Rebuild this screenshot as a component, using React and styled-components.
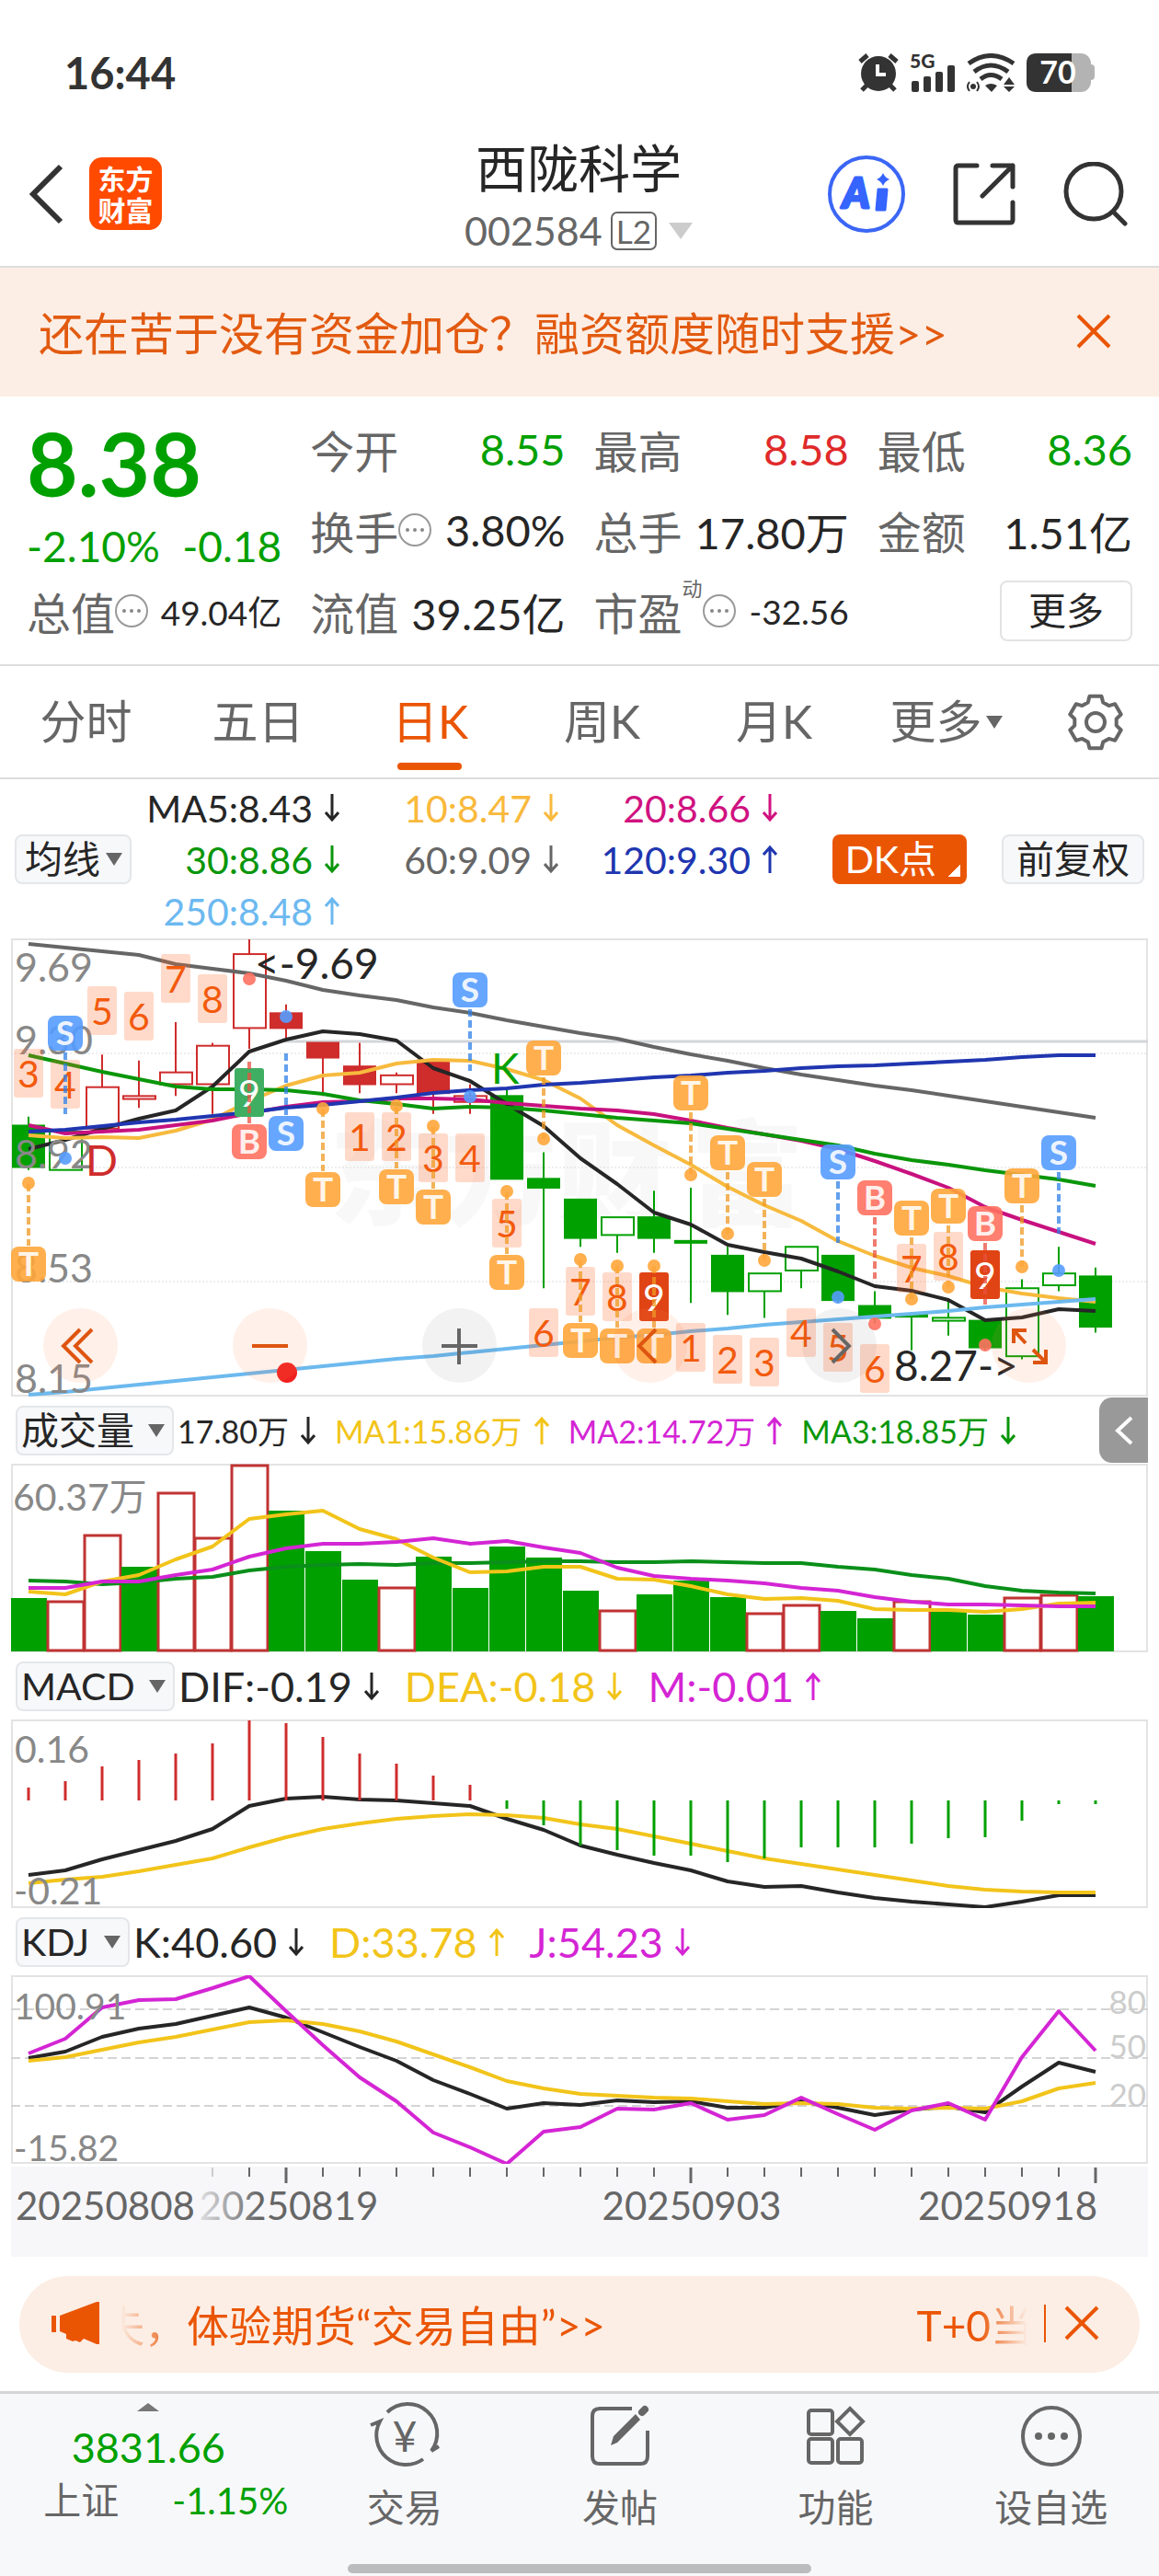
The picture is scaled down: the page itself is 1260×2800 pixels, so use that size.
import React, { useState } from "react";
import styled, { createGlobalStyle } from "styled-components";

const GREEN = "#00a000";
const UP = "#cf2c2c";
const ORANGE = "#ea5504";
const INK = "#262626";
const GREY = "#666666";
const YELLOW = "#f2c41a";
const PINK = "#d425d4";

const slotX = (i) => 31 + i * 40;

// [body top, body bottom, high, low, colour, filled]
const candles = [
  [9.06, 8.92, 9.09, 8.91, GREEN, 1],
  [9.04, 8.91, 9.04, 8.91, GREEN, 0],
  [9.19, 9.05, 9.3, 9.05, UP, 0],
  [9.16, 9.15, 9.28, 9.12, UP, 0],
  [9.24, 9.2, 9.41, 9.16, UP, 0],
  [9.33, 9.2, 9.34, 9.1, UP, 0],
  [9.64, 9.39, 9.69, 9.32, UP, 0],
  [9.44, 9.39, 9.47, 9.35, UP, 1],
  [9.34, 9.29, 9.34, 9.16, UP, 1],
  [9.26, 9.2, 9.34, 9.17, UP, 1],
  [9.23, 9.2, 9.24, 9.17, UP, 0],
  [9.28, 9.17, 9.28, 9.1, UP, 1],
  [9.16, 9.14, 9.2, 9.1, UP, 0],
  [9.16, 8.88, 9.18, 8.88, GREEN, 1],
  [8.88, 8.85, 8.97, 8.51, GREEN, 1],
  [8.81, 8.68, 8.81, 8.65, GREEN, 1],
  [8.75, 8.69, 8.75, 8.63, GREEN, 0],
  [8.75, 8.68, 8.84, 8.63, GREEN, 1],
  [8.67, 8.67, 8.85, 8.46, GREEN, 1],
  [8.62, 8.5, 8.65, 8.42, GREEN, 1],
  [8.56, 8.5, 8.56, 8.41, GREEN, 0],
  [8.65, 8.57, 8.65, 8.51, GREEN, 0],
  [8.62, 8.47, 8.62, 8.46, GREEN, 1],
  [8.45, 8.41, 8.5, 8.39, GREEN, 1],
  [8.42, 8.42, 8.42, 8.3, GREEN, 1],
  [8.41, 8.4, 8.47, 8.35, GREEN, 0],
  [8.4, 8.31, 8.4, 8.3, GREEN, 1],
  [8.51, 8.28, 8.54, 8.27, GREEN, 0],
  [8.56, 8.52, 8.65, 8.5, GREEN, 0],
  [8.55, 8.38, 8.58, 8.36, GREEN, 1],
];

const priceY = (p) => 1 + (9.69 - p) * 321.4;

const priceLines = [
  { color: "#666", ys: [6, 10, 14, 18, 28, 33, 38, 46, 56, 62, 67, 75, 81, 89, 96, 103, 109, 118, 126, 133, 141, 148, 154, 160, 165, 171, 177, 183, 189, 195] },
  { color: INK, ys: [229, 219, 207, 196, 187, 161, 123, 110, 101, 104, 111, 141, 155, 180, 204, 239, 267, 298, 311, 333, 341, 348, 362, 378, 383, 393, 415, 412, 403, 405] },
  { color: "#f7ba3e", ys: [214, 217, 216, 217, 209, 197, 177, 160, 149, 146, 136, 132, 133, 142, 154, 174, 203, 225, 246, 270, 290, 307, 329, 345, 358, 367, 379, 386, 391, 395] },
  { color: "#c8117f", ys: [203, 212, 210, 208, 203, 198, 190, 183, 178, 177, 174, 174, 175, 179, 182, 185, 187, 191, 198, 206, 213, 220, 229, 242, 256, 271, 292, 306, 319, 332] },
  { color: "#0a960a", ys: [127, 136, 145, 153, 161, 164, 164, 165, 169, 176, 180, 185, 183, 184, 187, 191, 195, 198, 201, 207, 213, 219, 225, 234, 241, 246, 252, 257, 262, 269] },
  { color: "#2036b0", ys: [210, 208, 204, 200, 197, 193, 189, 184, 181, 177, 173, 168, 165, 163, 159, 157, 154, 151, 149, 146, 144, 141, 139, 138, 136, 134, 132, 129, 127, 127] },
  { color: "#6cb9ee", ys: [496, 493, 489, 485, 481, 477, 473, 469, 465, 461, 457, 454, 450, 446, 442, 438, 434, 431, 427, 424, 420, 417, 414, 411, 408, 405, 401, 398, 395, 392] },
];

// [slot, number, top]
const counts = [
  [0, 3, 120], [1, 4, 132], [2, 5, 52], [3, 6, 58], [4, 7, 17], [5, 8, 39], [6, 9, 141, "#3fae63"],
  [9, 1, 189], [10, 2, 189], [11, 3, 212], [12, 4, 212], [13, 5, 283], [14, 6, 402], [15, 7, 357],
  [16, 8, 363], [17, 9, 363, "#e04415"], [18, 1, 418], [19, 2, 431], [20, 3, 434], [21, 4, 402],
  [22, 5, 418], [23, 6, 441], [24, 7, 332], [25, 8, 319], [26, 9, 339, "#e04415"],
];

// [slot, letter, box top, dot y]
const signals = [
  [0, "T", 335, 266], [1, "S", 84, 239], [6, "B", 202, 44], [7, "S", 193, 85], [8, "T", 254, 185],
  [10, "T", 251, 182], [11, "T", 273, 204], [12, "S", 37, 172], [13, "T", 344, 275], [14, "T", 111, 218],
  [15, "T", 418, 349], [16, "T", 424, 356], [17, "T", 424, 356], [18, "T", 149, 257], [19, "T", 214, 321],
  [20, "T", 243, 350], [22, "S", 224, 390], [23, "B", 263, 419], [24, "T", 285, 392], [25, "T", 272, 379],
  [26, "B", 291, 442], [27, "T", 250, 357], [28, "S", 214, 361],
];
const signalColors = {
  T: ["#ffa63a", "#ef9a22"],
  S: ["#559cff", "#2f80e8"],
  B: ["#ff7161", "#e9503f"],
};

const volumes = [17.3, 16.3, 37.7, 27.3, 51.3, 36.9, 60.3, 45.4, 32.5, 23.1, 20.8, 30.6, 20.6, 34, 30.4, 19.6, 13.5, 18.4, 22.9, 17.5, 12.5, 15.1, 13.1, 10.8, 16.3, 12.7, 11.8, 17.6, 18.5, 17.8];
const upDays = [1, 2, 4, 5, 6, 10, 16, 20, 21, 24, 27, 28];
const volumeLines = [
  { color: "#0a8f1a", ys: [127, 128, 131, 129, 125, 123, 116, 112, 110, 109, 110, 108, 108, 107, 106, 106, 107, 107, 106, 107, 108, 108, 112, 115, 121, 125, 133, 138, 140, 141] },
  { color: YELLOW, ys: [139, 142, 128, 121, 104, 90, 60, 55, 51, 71, 82, 102, 118, 117, 112, 112, 125, 126, 133, 142, 147, 146, 149, 158, 159, 159, 161, 158, 152, 151] },
  { color: PINK, ys: [135, 135, 128, 128, 121, 115, 101, 92, 87, 87, 85, 81, 87, 84, 91, 97, 113, 122, 125, 127, 130, 135, 138, 145, 150, 153, 153, 154, 155, 155] },
];

const macdEnds = [74, 67, 51, 44, 37, 26, 1, 4, 19, 37, 48, 61, 71, 97, 115, 137, 142, 148, 148, 155, 151, 139, 139, 139, 135, 129, 128, 110, 92, 92];
const macdLines = [
  { color: INK, ys: [169, 164, 152, 142, 132, 119, 94, 86, 84, 87, 88, 91, 94, 108, 120, 137, 147, 156, 164, 176, 182, 181, 188, 194, 198, 201, 204, 198, 191, 191] },
  { color: YELLOW, ys: [178, 174, 171, 165, 158, 151, 139, 128, 119, 113, 108, 105, 103, 104, 107, 114, 119, 127, 135, 143, 151, 157, 163, 169, 175, 181, 185, 187, 188, 188] },
];

const kdjLines = [
  { color: INK, ys: [90, 83, 67, 58, 53, 44, 35, 46, 62, 78, 93, 114, 129, 145, 139, 141, 136, 138, 137, 144, 144, 137, 144, 152, 146, 143, 149, 121, 95, 105] },
  { color: YELLOW, ys: [93, 89, 81, 73, 67, 59, 51, 49, 53, 61, 72, 86, 100, 115, 123, 129, 131, 133, 134, 137, 140, 139, 140, 144, 145, 144, 145, 137, 123, 117] },
  { color: PINK, ys: [85, 69, 35, 27, 26, 14, 1, 39, 76, 111, 137, 171, 187, 205, 170, 165, 145, 146, 139, 157, 152, 133, 151, 168, 147, 139, 157, 89, 39, 82] },
];

const averages = [
  ["MA5:8.43", "down", INK],
  ["10:8.47", "down", "#f9b93c"],
  ["20:8.66", "down", "#d0127f"],
  ["30:8.86", "down", "#0a960a"],
  ["60:9.09", "down", GREY],
  ["120:9.30", "up", "#2036b0"],
  ["250:8.48", "up", "#6cb9f0"],
];

const Lines = ({ series }) =>
  series.map((s) => (
    <polyline
      key={s.color}
      points={s.ys.map((y, i) => `${slotX(i)},${y}`).join(" ")}
      fill="none"
      stroke={s.color}
      strokeWidth="4"
      strokeLinejoin="round"
    />
  ));

const Frame = ({ height }) => (
  <rect x="13" y="1" width="1234" height={height - 2} fill="none" stroke="#e3e3e3" strokeWidth="2" />
);

const Arrow = ({ dir }) => (
  <ArrowSvg viewBox="0 0 16 32">
    <path
      d={dir === "up" ? "M8 31V3M1 11l7-8 7 8" : "M8 1v28M1 21l7 8 7-8"}
      fill="none"
      stroke="currentColor"
      strokeWidth="3"
    />
  </ArrowSvg>
);

const Cross = () => (
  <svg width="38" height="38" viewBox="0 0 38 38">
    <path d="M2 2l34 34M36 2L2 36" stroke={ORANGE} strokeWidth="4" />
  </svg>
);

const More = () => (
  <svg width="36" height="36" viewBox="0 0 36 36">
    <circle cx="18" cy="18" r="17" fill="none" stroke="#999" strokeWidth="2" />
    <circle cx="10" cy="18" r="2" fill="#888" />
    <circle cx="18" cy="18" r="2" fill="#888" />
    <circle cx="26" cy="18" r="2" fill="#888" />
  </svg>
);

const gearPoints = () => {
  const pts = [];
  for (let t = 0; t < 6; t++) {
    [[-21, 23], [-13, 29], [13, 29], [21, 23]].forEach(([a, r]) => {
      const rad = ((t * 60 + a - 90) * Math.PI) / 180;
      pts.push(`${(32 + r * Math.cos(rad)).toFixed(1)},${(32 + r * Math.sin(rad)).toFixed(1)}`);
    });
  }
  return pts.join(" ");
};

function StatusIcons() {
  return (
    <StatusRight>
      <svg width="44" height="42" viewBox="0 0 44 42">
        <circle cx="22" cy="22" r="19" fill="#333" />
        <path d="M2 9l8-7M42 9l-8-7M9 35l-5 5M35 35l5 5" stroke="#333" strokeWidth="5" />
        <path d="M21 12v11h9" fill="none" stroke="#fff" strokeWidth="4" />
      </svg>
      <svg width="50" height="42" viewBox="0 0 50 42" overflow="visible">
        <text x="0" y="16" fontSize="21" fontWeight="900" fill="#333">5G</text>
        <rect x="2" y="30" width="8" height="12" rx="2" fill="#333" />
        <rect x="15" y="25" width="8" height="17" rx="2" fill="#333" />
        <rect x="28" y="20" width="8" height="22" rx="2" fill="#333" />
        <rect x="41" y="13" width="8" height="29" rx="2" fill="#333" />
      </svg>
      <svg width="53" height="42" viewBox="0 0 53 42">
        <g fill="none" stroke="#333" strokeWidth="5">
          <path d="M2 11Q26 -6 51 11" />
          <path d="M8 20Q26 6 45 20" />
          <path d="M15 28Q26 19 38 28" />
        </g>
        <path d="M20 35q6 -4 13 0l-6 7z" fill="#333" />
        <circle cx="7" cy="36" r="3" fill="#333" />
        <path d="M3 31q-4 5 0 10M11 31q4 5 0 10" fill="none" stroke="#333" strokeWidth="2" />
        <path d="M40 34l6-8 6 8zM40 36h12l-6 6z" fill="#333" />
      </svg>
      <svg width="74" height="42" viewBox="0 0 74 42">
        <rect x="60" y="12" width="14" height="17" rx="4" fill="#b3b3b3" />
        <rect width="70" height="42" rx="11" fill="#b3b3b3" />
        <path d="M11 0H49V42H11Q0 42 0 31V11Q0 0 11 0Z" fill="#333" />
        <text x="34" y="33" textAnchor="middle" fontSize="34" fontWeight="700" fill="#fff">70</text>
      </svg>
    </StatusRight>
  );
}

function PriceChart() {
  return (
    <ChartBox>
      <ChartSvg viewBox="12 0 1236 498" role="img" aria-label="日K线图">
        <g fill="#f8f8f9" fontSize="124" fontWeight="900">
          <text x="358" y="302">东</text>
          <text x="482" y="302">方</text>
          <text x="606" y="302">财</text>
          <text x="750" y="302">富</text>
        </g>
        <Frame height={498} />
        {[125, 249, 373].map((y) => (
          <line key={y} x1="12" x2="1248" y1={y} y2={y} stroke="#dcdcdc" strokeWidth="1" strokeDasharray="2 2" />
        ))}
        <line x1="310" x2="1248" y1="112" y2="112" stroke="#d3d5d9" strokeWidth="3" />
        {candles.map(([top, bottom, high, low, color, filled], i) => {
          const x = slotX(i);
          const y = priceY(top);
          const h = Math.max(priceY(bottom) - y, 2);
          return (
            <g key={i} stroke={color} strokeWidth="2">
              <line x1={x} x2={x} y1={priceY(high)} y2={y} />
              <line x1={x} x2={x} y1={y + h} y2={priceY(low)} />
              <rect x={x - 17} y={y} width={filled ? 34 : 35} height={h} fill={filled ? color : "#fff"} />
            </g>
          );
        })}
        <Lines series={priceLines} />
        <g fill="#888" fontSize="43">
          <text x="16" y="47">9.69</text>
          <text x="16" y="126">9.30</text>
          <text x="16" y="250">8.92</text>
          <text x="16" y="374">8.53</text>
          <text x="16" y="494">8.15</text>
        </g>
        {counts.map(([slot, n, top, bg]) => (
          <g key={slot}>
            <rect x={slotX(slot) - 16} y={top} width="32" height="53" rx="3" fill={bg || "#ff6a2b"} fillOpacity={bg ? 1 : 0.25} />
            <text x={slotX(slot)} y={top + 42} textAnchor="middle" fontSize="41" fill={bg ? "#fff" : "#f25a0d"}>
              {n}
            </text>
          </g>
        ))}
        {signals.map(([slot, letter, top, dot]) => {
          const x = slotX(slot);
          const [fill, line] = signalColors[letter];
          const start = dot > top ? top + 40 : top - 68;
          return (
            <g key={slot}>
              <line x1={x} x2={x} y1={start} y2={start + 67} stroke={line} strokeOpacity="0.75" strokeWidth="4" strokeDasharray="8 4" />
              <circle cx={x} cy={dot} r="7" fill={fill} fillOpacity="0.9" />
              <rect x={x - 19} y={top} width="38" height="38" rx="8" fill={fill} fillOpacity="0.9" />
              <text x={x} y={top + 32} textAnchor="middle" fontSize="37" fontWeight="700" fill="#fff" fillOpacity="0.9">
                {letter}
              </text>
            </g>
          );
        })}
        <text x="93" y="258" fontSize="46" fill={UP}>D</text>
        <text x="534" y="158" fontSize="46" fill={GREEN}>K</text>
        <text x="277" y="44" fontSize="46" fill={INK}>&lt;-9.69</text>
        <text x="972" y="481" fontSize="46" fill={INK}>8.27-&gt;</text>
        <circle cx="312" cy="472" r="11" fill="#f02020" />
      </ChartSvg>
      <Controls>
        <RoundButton aria-label="快退">
          <path d="M40 22L22 40l18 18M53 22L35 40l18 18" />
        </RoundButton>
        <RoundButton aria-label="缩小">
          <path d="M21 40h39" />
        </RoundButton>
        <RoundButton aria-label="放大" $grey>
          <path d="M21 40h39M40 21v39" />
        </RoundButton>
        <RoundButton aria-label="左移">
          <path d="M47 22L29 40l18 18" />
        </RoundButton>
        <RoundButton aria-label="右移" $grey>
          <path d="M33 22l18 18-18 18" />
        </RoundButton>
        <RoundButton aria-label="全屏">
          <path d="M38 23H24v14M24 23l13 14M59 44v14H45M59 58L45 44" />
        </RoundButton>
      </Controls>
    </ChartBox>
  );
}

const RoundButton = ({ children, $grey, ...rest }) => (
  <Round type="button" $grey={$grey} {...rest}>
    <svg width="80" height="80" viewBox="0 0 80 80" fill="none" stroke="currentColor" strokeWidth="4">
      {children}
    </svg>
  </Round>
);

function VolumeChart() {
  return (
    <ChartSvg viewBox="12 0 1236 205" role="img" aria-label="成交量">
      <Frame height={205} />
      {volumes.map((v, i) => {
        const h = Math.round((v / 60.37) * 203);
        const up = upDays.includes(i);
        return up ? (
          <rect key={i} x={slotX(i) - 19} y={205 - h} width="39" height={h - 2} fill="#fff" stroke="#c03333" strokeWidth="3" />
        ) : (
          <rect key={i} x={slotX(i) - 19} y={204 - h} width="39" height={h} fill={GREEN} />
        );
      })}
      <Lines series={volumeLines} />
      <text x="14" y="51" fontSize="41" fill="#888">60.37万</text>
    </ChartSvg>
  );
}

function MacdChart() {
  return (
    <ChartSvg viewBox="12 0 1236 205" role="img" aria-label="MACD">
      <Frame height={205} />
      <Lines series={macdLines} />
      {macdEnds.map((y, i) => (
        <line key={i} x1={slotX(i)} x2={slotX(i)} y1="88" y2={y} stroke={y < 88 ? UP : GREEN} strokeWidth="3" />
      ))}
      <text x="16" y="47" fontSize="41" fill="#888">0.16</text>
      <text x="15" y="201" fontSize="41" fill="#888">-0.21</text>
    </ChartSvg>
  );
}

function KdjChart() {
  return (
    <ChartSvg viewBox="12 0 1236 205" role="img" aria-label="KDJ">
      <Frame height={205} />
      {[37, 90, 142].map((y) => (
        <line key={y} x1="12" x2="1248" y1={y} y2={y} stroke="#d4d4d4" strokeWidth="2" strokeDasharray="10 5" />
      ))}
      <Lines series={kdjLines} />
      <g fill="#888" fontSize="39">
        <text x="15" y="48">100.91</text>
        <text x="15" y="202">-15.82</text>
      </g>
      <g fill="#ccc" fontSize="35" textAnchor="end">
        <text x="1246" y="42">80</text>
        <text x="1246" y="90">50</text>
        <text x="1246" y="143">20</text>
      </g>
    </ChartSvg>
  );
}

function DateAxis() {
  const ticks = [];
  for (let i = 5; i < 30; i++) ticks.push(i);
  const major = [7, 18, 29];
  return (
    <ChartSvg viewBox="12 0 1236 101" role="img" aria-label="日期">
      <defs>
        <linearGradient id="fade" gradientUnits="userSpaceOnUse" x1="212" x2="282" y1="0" y2="0">
          <stop offset="0" stopColor={GREY} stopOpacity="0.1" />
          <stop offset="1" stopColor={GREY} />
        </linearGradient>
      </defs>
      <rect x="12" y="3" width="1236" height="98" fill="#f7f7fa" />
      {ticks.map((i) => (
        <line
          key={i}
          x1={slotX(i)}
          x2={slotX(i)}
          y1="4"
          y2={major.includes(i) ? 21 : 14}
          stroke={i === 5 ? "#ccc" : GREY}
          strokeWidth={major.includes(i) ? 3 : 2}
        />
      ))}
      <g fill={GREY} fontSize="42">
        <text x="17" y="61">20250808</text>
        <text x="314" y="61" textAnchor="middle" fill="url(#fade)">20250819</text>
        <text x="752" y="61" textAnchor="middle">20250903</text>
        <text x="1193" y="61" textAnchor="end">20250918</text>
      </g>
    </ChartSvg>
  );
}

const Picker = ({ label, name, wide }) => (
  <PickerBox $wide={wide}>
    <select aria-label={name} defaultValue={label}>
      <option>{label}</option>
    </select>
    <Caret />
  </PickerBox>
);

const Reading = ({ text, dir, color }) => (
  <ReadingBox $color={color}>
    {text}
    <Arrow dir={dir} />
  </ReadingBox>
);

export default function App() {
  const [tab, setTab] = useState("日K");

  return (
    <Page>
      <GlobalStyle />
      <StatusBar>
        <Clock>16:44</Clock>
        <StatusIcons />
      </StatusBar>

      <Header>
        <HeaderSide>
          <IconButton type="button" aria-label="返回">
            <svg width="38" height="66" viewBox="0 0 38 66">
              <path d="M34 3L4 33l30 30" fill="none" stroke="#333" strokeWidth="6" />
            </svg>
          </IconButton>
          <Logo>
            <span>东方</span>
            <span>财富</span>
          </Logo>
        </HeaderSide>
        <Title>
          <h1>西陇科学</h1>
          <Code>
            002584 <Level>L2</Level>
            <Caret $size={13} $color="#ccc" />
          </Code>
        </Title>
        <HeaderSide $end>
          <IconButton type="button" aria-label="AI">
            <svg width="84" height="84" viewBox="0 0 84 84">
              <circle cx="42" cy="42" r="40" fill="none" stroke="#3b66f5" strokeWidth="4" />
              <text x="16" y="57" fontSize="45" fontWeight="900" fontStyle="italic" fill="#3564ff" stroke="#3564ff" strokeWidth="3" strokeLinejoin="round">A</text>
              <path d="M55 37h9l-2 22h-9z" fill="#3564ff" stroke="#3564ff" strokeWidth="3" strokeLinejoin="round" />
              <path d="M60 19q2 5 7 7q-5 2-7 7q-2-5-7-7q5-2 7-7z" fill="#3564ff" />
            </svg>
          </IconButton>
          <IconButton type="button" aria-label="分享">
            <svg width="68" height="68" viewBox="0 0 68 68" fill="none" stroke="#333" strokeWidth="5" strokeLinecap="round" strokeLinejoin="round">
              <path d="M26 3H6Q3 3 3 6V62Q3 65 6 65H62Q65 65 65 62V43" />
              <path d="M43 3H65V26M65 3L32 36" />
            </svg>
          </IconButton>
          <IconButton type="button" aria-label="搜索">
            <svg width="70" height="70" viewBox="0 0 70 70" fill="none" stroke="#333" strokeWidth="5" strokeLinecap="round">
              <circle cx="33" cy="32" r="30" />
              <path d="M54 54l13 13" />
            </svg>
          </IconButton>
        </HeaderSide>
      </Header>

      <Banner>
        <a href="#margin">还在苦于没有资金加仓？融资额度随时支援&gt;&gt;</a>
        <IconButton type="button" aria-label="关闭">
          <Cross />
        </IconButton>
      </Banner>

      <Quote>
        <PriceCell>
          <Price>8.38</Price>
          <Change>
            <span>-2.10%</span>
            <span>-0.18</span>
          </Change>
        </PriceCell>
        <Stat><span>今开</span><Value $color={GREEN}>8.55</Value></Stat>
        <Stat><span>最高</span><Value $color="#e02a2a">8.58</Value></Stat>
        <Stat><span>最低</span><Value $color={GREEN}>8.36</Value></Stat>
        <Stat><span>换手<More /></span><Value>3.80%</Value></Stat>
        <Stat><span>总手</span><Value>17.80万</Value></Stat>
        <Stat><span>金额</span><Value>1.51亿</Value></Stat>
        <Stat><span>总值<More /></span><Value $small>49.04亿</Value></Stat>
        <Stat><span>流值</span><Value>39.25亿</Value></Stat>
        <Stat><span>市盈<sup>动</sup><More /></span><Value $small>-32.56</Value></Stat>
        <Stat $end><MoreButton type="button">更多</MoreButton></Stat>
      </Quote>

      <Tabs>
        {["分时", "五日", "日K", "周K", "月K"].map((t) => (
          <Tab key={t} type="button" $active={t === tab} onClick={() => setTab(t)}>
            <span>{t}</span>
          </Tab>
        ))}
        <Tab type="button">
          <span>更多</span>
          <Caret $size={9} />
        </Tab>
        <GearButton type="button" aria-label="设置">
          <svg width="64" height="64" viewBox="0 0 64 64" fill="none" stroke={GREY} strokeWidth="4" strokeLinejoin="round">
            <polygon points={gearPoints()} />
            <circle cx="32" cy="32" r="10" />
          </svg>
        </GearButton>
      </Tabs>

      <Averages>
        <Picker label="均线" name="均线" />
        <AverageGrid>
          {averages.map(([text, dir, color]) => (
            <Reading key={text} text={text} dir={dir} color={color} />
          ))}
        </AverageGrid>
        <ChipRow>
          <DkButton type="button">DK点</DkButton>
          <Chip type="button">前复权</Chip>
        </ChipRow>
      </Averages>

      <PriceChart />

      <Indicator>
        <Picker label="成交量" name="指标一" wide />
        <Readings $small>
          <Reading text="17.80万" dir="down" color={INK} />
          <Reading text="MA1:15.86万" dir="up" color={YELLOW} />
          <Reading text="MA2:14.72万" dir="up" color={PINK} />
          <Reading text="MA3:18.85万" dir="down" color="#0a960a" />
        </Readings>
        <Drawer type="button" aria-label="展开">
          <svg width="22" height="34" viewBox="0 0 22 34">
            <path d="M19 3L4 17l15 14" fill="none" stroke="#fff" strokeWidth="4" />
          </svg>
        </Drawer>
      </Indicator>
      <VolumeChart />

      <Indicator>
        <Picker label="MACD" name="指标二" wide />
        <Readings>
          <Reading text="DIF:-0.19" dir="down" color={INK} />
          <Reading text="DEA:-0.18" dir="down" color={YELLOW} />
          <Reading text="M:-0.01" dir="up" color={PINK} />
        </Readings>
      </Indicator>
      <MacdChart />

      <Indicator>
        <Picker label="KDJ" name="指标三" wide />
        <Readings>
          <Reading text="K:40.60" dir="down" color={INK} />
          <Reading text="D:33.78" dir="up" color={YELLOW} />
          <Reading text="J:54.23" dir="down" color={PINK} />
        </Readings>
      </Indicator>
      <KdjChart />
      <DateAxis />

      <Promo>
        <svg width="56" height="48" viewBox="0 0 56 48" fill={ORANGE}>
          <path d="M1 16h5v18H1zM10 16L50 1h3v46h-3L36 41l-4 4-5-2-3 1-7-3v-5l-7-3z" />
        </svg>
        <Ticker>
          <span>失，体验期货“交易自由”&gt;&gt;</span>
          <span>T+0当</span>
        </Ticker>
        <Divider />
        <IconButton type="button" aria-label="关闭">
          <Cross />
        </IconButton>
      </Promo>

      <BottomBar>
        <NavRow>
          <IndexBlock href="#index">
            <UpCaret />
            <strong>3831.66</strong>
            <div>
              <span>上证</span>
              <em>-1.15%</em>
            </div>
          </IndexBlock>
          <NavItem type="button">
            <NavIcon viewBox="0 0 80 80">
              <path d="M21 14A32 32 0 0 1 69 56L77 51" />
              <path d="M60 65A32 32 0 0 1 13 24L3 28" />
              <text x="40" y="57" textAnchor="middle" fontSize="46" fill={GREY} stroke="none">¥</text>
            </NavIcon>
            交易
          </NavItem>
          <NavItem type="button">
            <NavIcon viewBox="0 0 80 80">
              <path d="M53 10H18Q10 10 10 18V62Q10 70 18 70H62Q70 70 70 62V34" />
              <path d="M30 50l3-10 24-24 5 6-25 25z" fill={GREY} stroke="none" />
              <path d="M64 14l3-3" strokeWidth="8" strokeLinecap="round" />
            </NavIcon>
            发帖
          </NavItem>
          <NavItem type="button">
            <NavIcon viewBox="0 0 80 80">
              <rect x="11" y="12" width="26" height="26" rx="3" />
              <rect x="11" y="43" width="26" height="26" rx="3" />
              <rect x="43" y="43" width="26" height="26" rx="3" />
              <path d="M56 10l14 14-14 14-14-14z" />
            </NavIcon>
            功能
          </NavItem>
          <NavItem type="button">
            <NavIcon viewBox="0 0 80 80">
              <circle cx="40" cy="40" r="31" />
              <g fill={GREY} stroke="none">
                <circle cx="26" cy="40" r="4" />
                <circle cx="40" cy="40" r="4" />
                <circle cx="54" cy="40" r="4" />
              </g>
            </NavIcon>
            设自选
          </NavItem>
        </NavRow>
        <HomeBar />
      </BottomBar>
    </Page>
  );
}

const GlobalStyle = createGlobalStyle`
  * {
    box-sizing: border-box;
  }
  body {
    margin: 0;
    background: #fff;
    color: ${INK};
    font-family: Lato, "Noto Sans CJK SC", sans-serif;
  }
  button, select {
    font: inherit;
    color: inherit;
    margin: 0;
    padding: 0;
    border: 0;
    background: none;
    cursor: pointer;
  }
  a {
    color: inherit;
    text-decoration: none;
  }
  svg {
    display: block;
    flex: none;
  }
`;

const Page = styled.div`
  display: flex;
  flex-direction: column;
  min-height: 100vh;
`;

const StatusBar = styled.div`
  display: flex;
  align-items: center;
  justify-content: space-between;
  height: 132px;
  padding: 26px 70px 0;
`;

const Clock = styled.span`
  font-size: 47px;
  font-weight: 700;
  color: #333;
`;

const StatusRight = styled.div`
  display: flex;
  gap: 12px;
`;

const Header = styled.header`
  display: grid;
  grid-template-columns: 1fr auto 1fr;
  align-items: center;
  height: 159px;
  padding: 0 34px 0 32px;
  border-bottom: 2px solid #ddd;
`;

const HeaderSide = styled.div`
  display: flex;
  align-items: center;
  gap: ${(p) => (p.$end ? 52 : 27)}px;
  justify-content: ${(p) => (p.$end ? "flex-end" : "flex-start")};
`;

const IconButton = styled.button`
  display: flex;
`;

const Logo = styled.div`
  display: flex;
  flex-direction: column;
  justify-content: center;
  align-items: center;
  width: 79px;
  height: 79px;
  border-radius: 14px;
  background: #ff4a00;
  color: #fff;
  font-size: 30px;
  font-weight: 700;
  line-height: 34px;
`;

const Title = styled.div`
  display: flex;
  flex-direction: column;
  align-items: center;
  padding-top: 12px;

  h1 {
    margin: 0;
    font-size: 56px;
    font-weight: 400;
    line-height: 68px;
  }
`;

const Code = styled.div`
  display: flex;
  align-items: center;
  gap: 9px;
  font-size: 43px;
  line-height: 68px;
  color: ${GREY};
`;

const Level = styled.span`
  padding: 0 4px;
  border: 2px solid ${GREY};
  border-radius: 7px;
  font-size: 35px;
  line-height: 38px;
`;

const Caret = styled.i`
  width: 0;
  height: 0;
  margin-left: 4px;
  border: ${(p) => p.$size || 9}px solid transparent;
  border-top: ${(p) => (p.$size || 9) + 5}px solid ${(p) => p.$color || GREY};
  border-bottom: 0;
`;

const Banner = styled.div`
  display: flex;
  align-items: center;
  justify-content: space-between;
  height: 140px;
  padding: 0 52px 3px 42px;
  background: #fceee5;
  color: #e25a10;
  font-size: 49px;
`;

const Quote = styled.section`
  display: grid;
  grid-template-columns: repeat(4, 1fr);
  grid-auto-rows: 88px;
  column-gap: 31px;
  padding: 13px 29px 14px;
  border-bottom: 2px solid #ddd;
`;

const PriceCell = styled.div`
  grid-row: span 2;
  padding-top: 4px;
  color: ${GREEN};
`;

const Price = styled.div`
  font-size: 96px;
  font-weight: 700;
  line-height: 110px;
`;

const Change = styled.div`
  display: flex;
  justify-content: space-between;
  font-size: 46px;
  line-height: 72px;
`;

const Stat = styled.div`
  display: flex;
  align-items: center;
  justify-content: ${(p) => (p.$end ? "flex-end" : "space-between")};
  font-size: 48px;
  color: ${GREY};
  white-space: nowrap;

  span {
    display: flex;
    align-items: center;
  }
  sup {
    align-self: flex-start;
    font-size: 22px;
    line-height: 22px;
  }
`;

const Value = styled.b`
  font-weight: 400;
  font-size: ${(p) => (p.$small ? 37 : 47)}px;
  color: ${(p) => p.$color || INK};
`;

const MoreButton = styled.button`
  width: 144px;
  height: 66px;
  border: 2px solid #e3e3e3;
  border-radius: 8px;
  font-size: 41px;
  line-height: 60px;
  color: ${INK};
`;

const Tabs = styled.nav`
  display: flex;
  height: 123px;
  border-bottom: 2px solid #ddd;
`;

const Tab = styled.button`
  flex: 187;
  display: flex;
  align-items: center;
  justify-content: center;
  font-size: 50px;
  color: ${(p) => (p.$active ? ORANGE : GREY)};

  span {
    display: flex;
    flex-direction: column;
    align-items: center;
    height: 100%;
    padding-top: 15px;
    line-height: 90px;
  }
  span::after {
    content: "";
    width: 70px;
    height: 8px;
    border-radius: 4px;
    background: ${(p) => (p.$active ? ORANGE : "transparent")};
  }
`;

const GearButton = styled.button`
  flex: 138;
  display: flex;
  align-items: center;
  justify-content: center;
`;

const Averages = styled.section`
  display: flex;
  align-items: center;
  padding: 3px 16px 2px;
`;

const AverageGrid = styled.div`
  display: grid;
  grid-template-columns: 226px 238px 238px;
  grid-auto-rows: 56px;
  justify-items: end;
  font-size: 41px;
`;

const ReadingBox = styled.span`
  display: flex;
  align-items: center;
  gap: 13px;
  color: ${(p) => p.$color};
  white-space: nowrap;
`;

const ArrowSvg = styled.svg`
  width: 16px;
  height: 32px;
`;

const ChipRow = styled.div`
  display: flex;
  gap: 38px;
  margin-left: auto;
`;

const Chip = styled.button`
  height: 54px;
  padding: 0 14px;
  border: 2px solid #e4e6e9;
  border-radius: 8px;
  background: #f7f8fa;
  font-size: 41px;
  line-height: 48px;
`;

const DkButton = styled(Chip)`
  padding: 0 33px 0 14px;
  border: 0;
  color: #fff;
  background: linear-gradient(135deg, transparent 50%, #fff 50%) right 7px bottom 8px / 14px 14px no-repeat ${ORANGE};
`;

const PickerBox = styled.label`
  display: flex;
  align-items: center;
  height: 54px;
  padding: 0 8px 0 ${(p) => (p.$wide ? 4 : 9)}px;
  border: 2px solid #e4e6e9;
  border-radius: 8px;
  background: #f7f8fa;

  select {
    appearance: none;
    margin-right: ${(p) => (p.$wide ? 11 : 2)}px;
    font-size: 41px;
    line-height: 50px;
  }
`;

const ChartBox = styled.section`
  position: relative;
  padding: 0 12px;
`;

const ChartSvg = styled.svg`
  align-self: center;
  width: 100%;
  height: auto;

  ${Page} > & {
    width: calc(100% - 24px);
  }
`;

const Controls = styled.div`
  position: absolute;
  left: 47px;
  right: 101px;
  bottom: 15px;
  display: flex;
  justify-content: space-between;
`;

const Round = styled.button`
  width: 81px;
  height: 81px;
  border-radius: 50%;
  color: ${(p) => (p.$grey ? GREY : "#de5510")};
  background: ${(p) => (p.$grey ? "rgba(90, 90, 90, 0.08)" : "rgba(255, 130, 70, 0.12)")};
`;

const Indicator = styled.section`
  display: flex;
  align-items: center;
  height: 73px;
  padding: 0 12px 0 17px;
`;

const Readings = styled.div`
  display: flex;
  gap: ${(p) => (p.$small ? 21 : 28)}px;
  margin-left: 4px;
  font-size: ${(p) => (p.$small ? 34 : 45)}px;
`;

const Drawer = styled.button`
  display: flex;
  align-items: center;
  justify-content: center;
  width: 53px;
  height: 71px;
  margin-left: auto;
  border-radius: 14px 0 0 14px;
  background: #999;
`;

const Promo = styled.aside`
  display: flex;
  align-items: center;
  height: 105px;
  margin: 21px 21px 20px;
  padding: 0 44px 3px 34px;
  border-radius: 53px;
  background: #fceee5;
  color: ${ORANGE};
  font-size: 46px;
`;

const Ticker = styled.div`
  flex: 1;
  display: flex;
  justify-content: space-between;
  overflow: hidden;
  white-space: nowrap;
  mask-image: linear-gradient(90deg, transparent 20px, #000 80px, #000 calc(100% - 60px), transparent calc(100% - 6px));
`;

const Divider = styled.i`
  width: 2px;
  height: 41px;
  margin: 0 20px 0 12px;
  background: ${ORANGE};
`;

const BottomBar = styled.footer`
  display: flex;
  flex-direction: column;
  flex: 1;
  border-top: 3px solid #d5d6d8;
  background: #f7f8fa;
`;

const NavRow = styled.nav`
  display: flex;
  flex: 1;
`;

const IndexBlock = styled.a`
  flex: 322;
  display: flex;
  flex-direction: column;
  align-items: center;
  padding-top: 10px;
  line-height: 58px;
  color: ${GREEN};

  strong {
    margin-top: 10px;
    font-size: 45px;
    font-weight: 400;
  }
  div {
    display: flex;
    gap: 58px;
    padding-left: 38px;
  }
  span {
    font-size: 41px;
    color: ${GREY};
  }
  em {
    font-size: 40px;
    font-style: normal;
  }
`;

const UpCaret = styled.i`
  border: 12px solid transparent;
  border-bottom: 9px solid #777;
  border-top: 0;
`;

const NavItem = styled.button`
  flex: 234;
  display: flex;
  flex-direction: column;
  align-items: center;
  gap: 14px;
  padding-top: 6px;
  font-size: 41px;
  line-height: 48px;
  color: ${GREY};
`;

const NavIcon = styled.svg`
  width: 80px;
  height: 80px;
  fill: none;
  stroke: ${GREY};
  stroke-width: 4;
`;

const HomeBar = styled.div`
  width: 40%;
  height: 10px;
  margin: 0 auto 3px;
  border-radius: 5px;
  background: #bbbcbe;
`;
